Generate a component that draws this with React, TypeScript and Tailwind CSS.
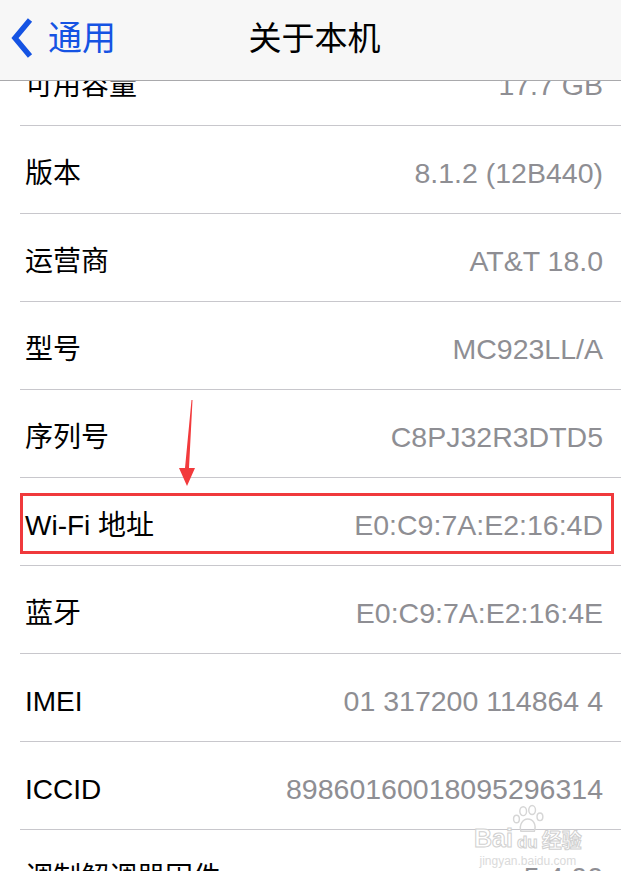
import React from "react";

const rows: [string, string][] = [
  ["可用容量", "17.7 GB"],
  ["版本", "8.1.2 (12B440)"],
  ["运营商", "AT&T 18.0"],
  ["型号", "MC923LL/A"],
  ["序列号", "C8PJ32R3DTD5"],
  ["Wi-Fi 地址", "E0:C9:7A:E2:16:4D"],
  ["蓝牙", "E0:C9:7A:E2:16:4E"],
  ["IMEI", "01 317200 114864 4"],
  ["ICCID", "89860160018095296314"],
  ["调制解调器固件", "5.4.00"],
];

const FONT = "font-['Liberation_Sans','Noto_Sans_CJK_SC',sans-serif]";

export default function App() {
  return (
    <div className={`relative w-[621px] h-[871px] overflow-hidden bg-white ${FONT}`}>
      <div className="pt-[38px]">
        {rows.map(([label, value]) => (
          <div
            key={label}
            className="ml-[20px] h-[88px] border-b border-[#c8c7cc] flex items-center justify-between pl-[5px] pr-[18px] pt-[8px]"
          >
            <span className="text-[28px] text-black leading-none">{label}</span>
            <span className="text-[28.5px] text-[#8e8e93] leading-none">{value}</span>
          </div>
        ))}
      </div>

      {/* Navigation bar */}
      <div className="absolute top-0 left-0 w-full h-[81px] bg-[#f7f7f7] border-b border-[#a9a9ac] flex items-center pb-[4px]">
        <div className="flex items-center pl-[11px] gap-[15px] text-[#1553e3]">
          <svg width="22" height="42" viewBox="0 0 22 42">
            <path d="M19 3 L4 21 L19 39" fill="none" stroke="#1553e3" strokeWidth="5.5" />
          </svg>
          <span className="text-[34px] leading-none">通用</span>
        </div>
        <div className="absolute inset-0 flex items-center justify-center pb-[4px]">
          <span className="text-[33px] leading-none text-black pl-[8px]">关于本机</span>
        </div>
      </div>

      {/* Red highlight box */}
      <div className="absolute left-[20px] top-[493px] w-[594px] h-[61px] border-[3px] border-[#f0393c]" />

      {/* Red arrow */}
      <svg className="absolute left-[175px] top-[398px]" width="24" height="90" viewBox="0 0 24 90">
        <path d="M16.5 2 L17.5 2 L14 70 L20 70 L12 88 L4 70 L10 70 Z" fill="#f23a3c" />
      </svg>

      {/* Baidu watermark */}
      <div className="absolute left-[474px] top-[804px] flex flex-col items-center text-[#dcdcdc]">
        <svg width="38" height="30" viewBox="0 0 34 26" className="ml-[6px]">
          <g fill="none" stroke="#d6d6d6" strokeWidth="1.3">
            <ellipse cx="10" cy="6" rx="3" ry="4" />
            <ellipse cx="18" cy="5" rx="3" ry="4" />
            <ellipse cx="4" cy="13" rx="2.6" ry="3.4" />
            <ellipse cx="25" cy="11" rx="2.6" ry="3.4" />
            <path d="M8 24 C6 18 10 13 14 13 C19 13 22 18 20 24 Z" />
          </g>
        </svg>
        <div className="flex items-end gap-[4px] leading-none -mt-[8px]">
          <span className="text-[25px] font-bold text-white [-webkit-text-stroke:1px_#d0d0d0]">Bai</span>
          <span className="text-[17px] font-bold text-white [-webkit-text-stroke:1px_#d0d0d0]">du</span>
          <span className="text-[20px] font-bold text-white [-webkit-text-stroke:1px_#d0d0d0]">经验</span>
        </div>
        <span className="text-[12px] leading-none mt-[4px] text-[#dadada]">jingyan.baidu.com</span>
      </div>
    </div>
  );
}
